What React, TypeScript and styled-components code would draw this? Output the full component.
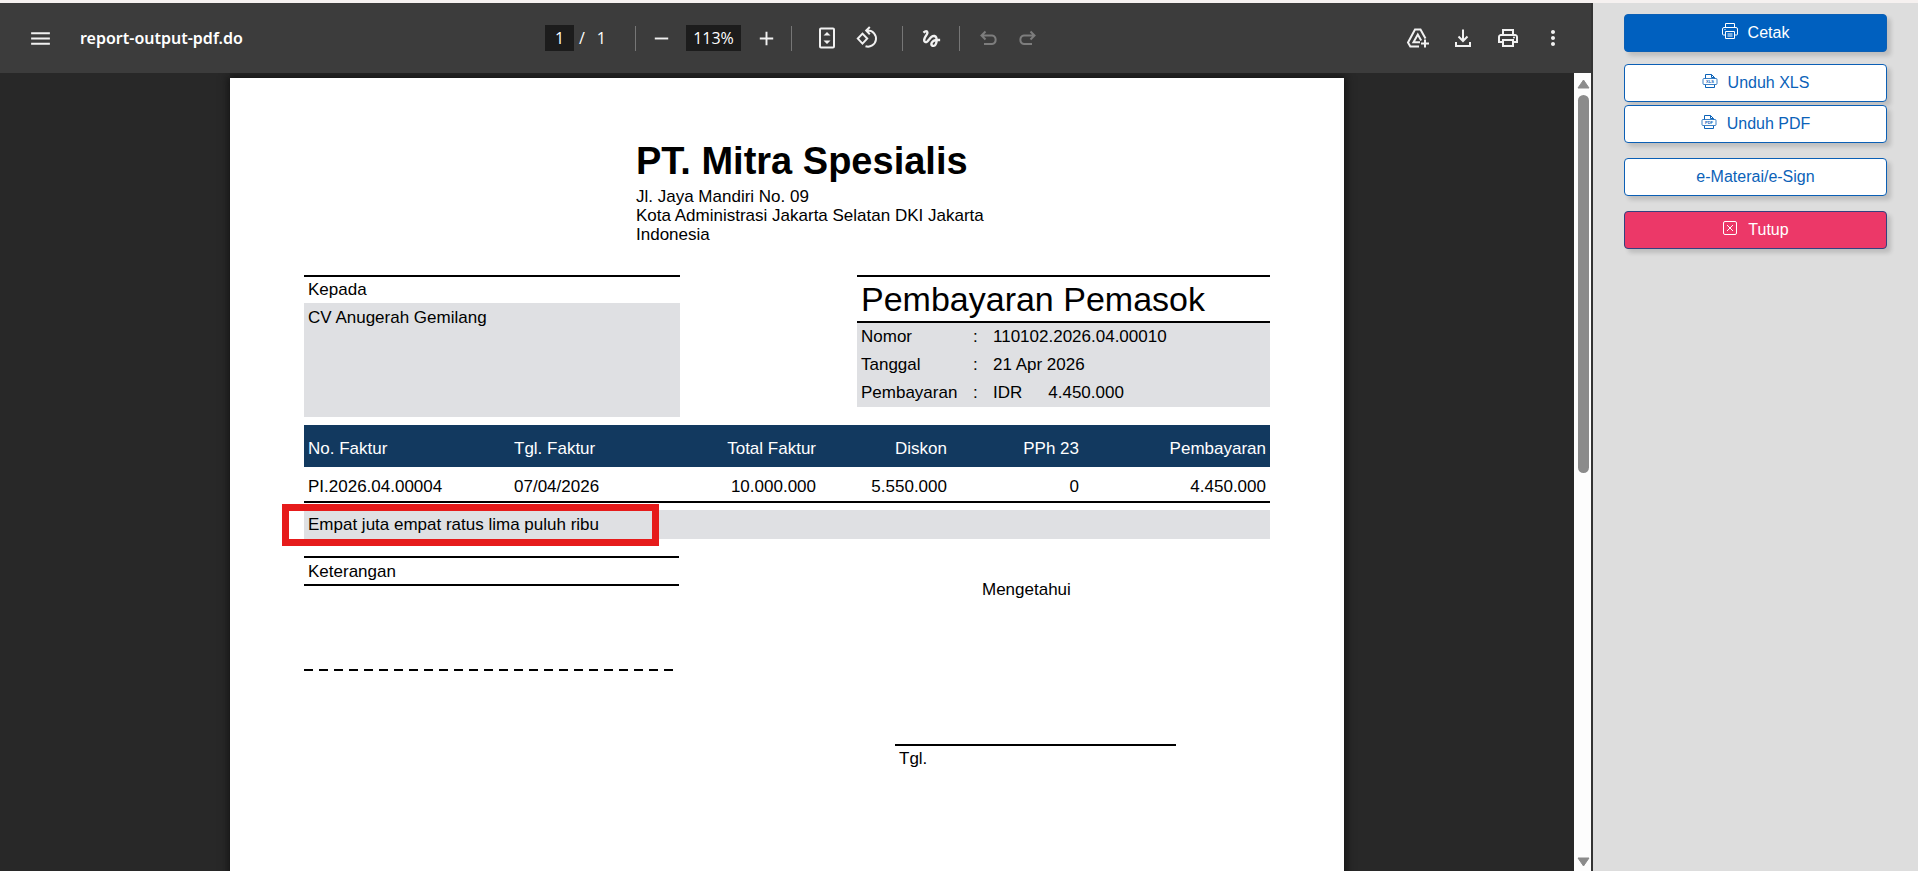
import React from "react";
import styled, { createGlobalStyle, css } from "styled-components";
import { MdOutlinePrint, MdMoreVert, MdMenu, MdAdd, MdRemove, MdGesture } from "react-icons/md";

const GlobalStyle = createGlobalStyle`
  *, *::before, *::after { box-sizing: border-box; }
  body { margin: 0; background: #f6f1f0; }
  h1, h2, p, dl, dd, dt { margin: 0; font-weight: inherit; }
`;

const Shell = styled.div`
  display: flex;
  height: 100vh;
  padding-top: 3px;
  overflow: hidden;
  font-family: "Liberation Sans", Arial, sans-serif;
`;

const Viewer = styled.main`
  flex: 1;
  min-width: 0;
  display: flex;
  flex-direction: column;
  background: #282828;
  border-right: 2px solid #333333;
`;

const Toolbar = styled.header`
  flex: none;
  height: 70px;
  display: grid;
  grid-template-columns: 1fr auto 1fr;
  align-items: center;
  padding: 0 18px 0 20px;
  background: #3c3c3c;
  color: #ffffff;
  font-family: "Open Sans", "Noto Sans", sans-serif;
  font-size: 16px;
`;

const ToolGroup = styled.div<{ $gap: number; $end?: boolean }>`
  display: flex;
  align-items: center;
  justify-content: ${(p) => (p.$end ? "flex-end" : "flex-start")};
  gap: ${(p) => p.$gap}px;
`;

const PageTools = styled.div`
  display: flex;
  padding: 0 7px 0 10px;
`;

const IconButton = styled.button`
  display: flex;
  align-items: center;
  justify-content: center;
  width: 40px;
  height: 40px;
  padding: 0;
  border: 0;
  background: none;
  color: #f1f1f1;
  &:disabled { color: #7d7d7d; }
`;

const FileName = styled.h1`
  font-family: "Noto Sans", "Open Sans", sans-serif;
  font-size: 16px;
  font-weight: 600;
  white-space: nowrap;
`;

const Field = styled.input<{ $wide?: boolean }>`
  width: ${(p) => (p.$wide ? 55 : 29)}px;
  height: 26px;
  padding: 0;
  border: 0;
  background: #1c1c1c;
  color: #ffffff;
  font: inherit;
  text-align: center;
`;

const PageCount = styled.span`
  display: flex;
  gap: 12px;
  margin: 0 24px 0 5px;
`;

const Divider = styled.span<{ $space: number }>`
  width: 1px;
  height: 25px;
  margin: 0 ${(p) => p.$space}px;
  background: #767676;
`;

const Stage = styled.div`
  flex: 1;
  min-height: 0;
  display: flex;
`;

const Canvas = styled.div`
  flex: 1;
  min-width: 0;
  display: flex;
  justify-content: center;
  align-items: flex-start;
  padding-top: 5px;
  overflow: hidden;
`;

const Sheet = styled.article`
  flex: none;
  width: 1114px;
  min-height: 1575px;
  padding: 61px 74px;
  background: #ffffff;
  color: #000000;
  font-size: 17px;
  line-height: 19px;
  box-shadow: 0 0 8px 2px #141414;
`;

const Track = styled.div`
  flex: none;
  width: 17px;
  display: flex;
  flex-direction: column;
  align-items: center;
  justify-content: space-between;
  gap: 6px;
  padding: 6px 0 4px 1px;
  background: #fdfdfd;
`;

const ThumbLane = styled.div`
  flex: 1;
`;

const Thumb = styled.div`
  width: 11px;
  height: 50%;
  border-radius: 6px;
  background: #8b8b8b;
`;

const Letterhead = styled.header`
  padding-left: 332px;
`;

const Company = styled.h2`
  font-size: 38px;
  line-height: 44px;
  font-weight: 700;
  margin-bottom: 4px;
`;

const Parties = styled.div`
  display: flex;
  justify-content: space-between;
  align-items: flex-start;
  margin-top: 31px;
`;

const Panel = styled.section<{ $width: number }>`
  width: ${(p) => p.$width}px;
  border-top: 2px solid #000000;
`;

const PanelLabel = styled.h3<{ $ruled?: boolean }>`
  margin: 0;
  padding: 3px 4px;
  height: 26px;
  font-size: 17px;
  font-weight: 400;
  ${(p) => p.$ruled && css`height: 28px; padding: 4px; border-bottom: 2px solid #000000;`}
`;

const Recipient = styled.p`
  height: 114px;
  padding: 5px 4px;
  background: #dfe0e3;
`;

const DocTitle = styled.h3`
  margin: 0;
  padding: 3px 4px 0;
  height: 46px;
  border-bottom: 2px solid #000000;
  font-size: 34px;
  line-height: 38px;
  font-weight: 400;
  white-space: nowrap;
`;

const Facts = styled.dl`
  display: grid;
  grid-template-columns: 112px 20px 1fr;
  grid-auto-rows: 28px;
  padding: 4px 4px 0;
  height: 84px;
  background: #dfe0e3;
`;

const Money = styled.dd`
  display: flex;
  gap: 26px;
`;

const Invoices = styled.table`
  width: 100%;
  margin-top: 8px;
  table-layout: fixed;
  border-collapse: collapse;
  border-bottom: 2px solid #000000;
`;

const HeadRow = styled.tr`
  height: 42px;
  background: #12395f;
  color: #ffffff;
`;

const BodyRow = styled.tr`
  height: 35px;
`;

const cell = css<{ $num?: boolean }>`
  padding: 4px 4px 0;
  font-weight: 400;
  text-align: ${(p) => (p.$num ? "right" : "left")};
`;
const Th = styled.th<{ $num?: boolean }>`${cell}`;
const Td = styled.td<{ $num?: boolean }>`${cell}`;

const Words = styled.p`
  position: relative;
  height: 29px;
  margin-top: 7px;
  padding: 5px 4px;
  background: #dfe0e3;
`;

const Highlight = styled.span`
  position: absolute;
  top: -6px;
  left: -22px;
  width: 377px;
  height: 42px;
  border: 7px solid #e61b1b;
`;

const Footer = styled.div`
  display: flex;
  justify-content: space-between;
  align-items: flex-start;
  margin-top: 17px;
`;

const Dashes = styled.hr`
  height: 2px;
  margin: 83px 0 0;
  border: 0;
  background: repeating-linear-gradient(90deg, #000000 0 9px, transparent 9px 15px);
`;

const Approval = styled.section`
  width: 281px;
  margin: 24px 94px 0 0;
`;

const Approver = styled.p`
  padding-left: 87px;
`;

const SignDate = styled.p`
  margin-top: 145px;
  padding: 3px 4px;
  border-top: 2px solid #000000;
`;

const Sidebar = styled.aside`
  flex: none;
  width: 325px;
  display: flex;
  flex-direction: column;
  gap: 12px;
  padding: 11px 31px;
  background: #dddddd;
`;

const Stack = styled.div`
  display: flex;
  flex-direction: column;
  gap: 15px;
`;

const Downloads = styled.div`
  display: flex;
  flex-direction: column;
  gap: 3px;
`;

const tones = {
  primary: css`background: #0060bf; color: #ffffff;`,
  plain: css`background: #ffffff; color: #0b62b8;`,
  danger: css`background: #ec3868; color: #ffffff; border-color: #33417f;`,
};

const Action = styled.button<{ $tone: keyof typeof tones }>`
  flex: none;
  display: flex;
  align-items: center;
  justify-content: center;
  gap: 10px;
  height: 38px;
  width: 100%;
  padding: 0;
  border: 1px solid #0b5fb5;
  border-radius: 4px;
  box-shadow: 4px 4px 4px rgba(0, 0, 0, 0.14);
  font-family: inherit;
  font-size: 16px;
  ${(p) => tones[p.$tone]}

  svg { margin-bottom: 4px; }
`;

const Icon = ({ children, size = 24 }: { children: React.ReactNode; size?: number }) => (
  <svg width={size} height={size} viewBox="0 0 24 24" fill="none" stroke="currentColor" strokeWidth="2" aria-hidden="true">
    {children}
  </svg>
);

const SmallIcon = ({ children }: { children: React.ReactNode }) => (
  <svg width="16" height="16" viewBox="0 0 16 16" fill="none" stroke="currentColor" strokeWidth="1" strokeLinejoin="round" aria-hidden="true">
    {children}
  </svg>
);

const FileIcon = ({ label }: { label: string }) => (
  <SmallIcon>
    <path d="M3.500 5.500V1.500h6l3 3v1M9.500 1.500v3h3M3.500 12v2.500h9V12" />
    <path d="M2 5.500h12a1 1 0 0 1 1 1v4a1 1 0 0 1-1 1H2a1 1 0 0 1-1-1v-4a1 1 0 0 1 1-1z" strokeOpacity="0.8" />
    <text x="8" y="10" fontSize="4" fontWeight="700" textAnchor="middle" fill="currentColor" stroke="none">{label}</text>
  </SmallIcon>
);

const columns = [
  { label: "No. Faktur", width: 206, value: "PI.2026.04.00004" },
  { label: "Tgl. Faktur", width: 140, value: "07/04/2026" },
  { label: "Total Faktur", width: 170, value: "10.000.000", num: true },
  { label: "Diskon", width: 131, value: "5.550.000", num: true },
  { label: "PPh 23", width: 132, value: "0", num: true },
  { label: "Pembayaran", width: 187, value: "4.450.000", num: true },
];

export default function App() {
  return (
    <>
      <GlobalStyle />
      <Shell>
        <Viewer>
          <Toolbar>
            <ToolGroup $gap={20}>
              <IconButton aria-label="Menu"><MdMenu size={25} /></IconButton>
              <FileName>report-output-pdf.do</FileName>
            </ToolGroup>
            <ToolGroup $gap={0}>
              <Field aria-label="Page" defaultValue="1" />
              <PageCount><span>/</span><span>1</span></PageCount>
              <Divider $space={5} />
              <ToolGroup $gap={5}>
                <IconButton aria-label="Zoom out"><MdRemove size={23} /></IconButton>
                <Field $wide aria-label="Zoom" defaultValue="113%" />
                <IconButton aria-label="Zoom in"><MdAdd size={23} /></IconButton>
              </ToolGroup>
              <Divider $space={5} />
              <PageTools>
                <IconButton aria-label="Fit to page">
                  <Icon>
                    <rect x="5" y="2.500" width="14" height="19" rx="1" />
                    <path d="M12 6l3.500 3.500h-7zM12 18l3.500-3.500h-7z" fill="currentColor" stroke="none" />
                  </Icon>
                </IconButton>
                <IconButton aria-label="Rotate">
                  <Icon>
                    <path d="M7.500 7.600 12.200 12.600 7.500 17.600 2.800 12.600z" />
                    <path d="M12 4.600h1a8 8 0 1 1-2.500 15.600M14.800 1l-3.600 3.600 3.600 3.600" />
                  </Icon>
                </IconButton>
              </PageTools>
              <Divider $space={8} />
              <IconButton aria-label="Draw"><MdGesture size={23} /></IconButton>
              <Divider $space={8} />
              <IconButton aria-label="Undo" disabled>
                <Icon><path d="M9.500 5.500 5.500 9.500l4 4M5.500 9.500H16a4.300 4.300 0 0 1 0 8.500H8" /></Icon>
              </IconButton>
              <IconButton aria-label="Redo" disabled>
                <Icon><path d="M14.500 5.500l4 4-4 4M18.500 9.500H8A4.300 4.300 0 0 0 8 18h8" /></Icon>
              </IconButton>
            </ToolGroup>
            <ToolGroup $gap={5} $end>
              <IconButton aria-label="Save to Drive">
                <Icon>
                  <path d="M13 20.500H4.300L2 16.500 9 3.500h5.500l5 9" />
                  <path d="M14 16.200H7.500L11.800 8.500l3.400 6" />
                  <path d="M19 13.500v8M15 17.500h8" />
                </Icon>
              </IconButton>
              <IconButton aria-label="Download">
                <Icon><path d="M12 3.500v11.500M7.500 10.500l4.500 4.500 4.500-4.500M5 16v4h14v-4" /></Icon>
              </IconButton>
              <IconButton aria-label="Print"><MdOutlinePrint size={24} /></IconButton>
              <IconButton aria-label="More"><MdMoreVert size={24} /></IconButton>
            </ToolGroup>
          </Toolbar>
          <Stage>
            <Canvas>
              <Sheet>
                <Letterhead>
                  <Company>PT. Mitra Spesialis</Company>
                  <p>Jl. Jaya Mandiri No. 09</p>
                  <p>Kota Administrasi Jakarta Selatan DKI Jakarta</p>
                  <p>Indonesia</p>
                </Letterhead>
                <Parties>
                  <Panel $width={376}>
                    <PanelLabel>Kepada</PanelLabel>
                    <Recipient>CV Anugerah Gemilang</Recipient>
                  </Panel>
                  <Panel $width={413}>
                    <DocTitle>Pembayaran Pemasok</DocTitle>
                    <Facts>
                      <dt>Nomor</dt><dd>:</dd><dd>110102.2026.04.00010</dd>
                      <dt>Tanggal</dt><dd>:</dd><dd>21 Apr 2026</dd>
                      <dt>Pembayaran</dt><dd>:</dd><Money><span>IDR</span><span>4.450.000</span></Money>
                    </Facts>
                  </Panel>
                </Parties>
                <Invoices>
                  <colgroup>{columns.map((c) => <col key={c.label} width={c.width} />)}</colgroup>
                  <thead>
                    <HeadRow>{columns.map((c) => <Th key={c.label} $num={c.num}>{c.label}</Th>)}</HeadRow>
                  </thead>
                  <tbody>
                    <BodyRow>{columns.map((c) => <Td key={c.label} $num={c.num}>{c.value}</Td>)}</BodyRow>
                  </tbody>
                </Invoices>
                <Words>
                  Empat juta empat ratus lima puluh ribu
                  <Highlight />
                </Words>
                <Footer>
                  <Panel $width={375}>
                    <PanelLabel $ruled>Keterangan</PanelLabel>
                    <Dashes />
                  </Panel>
                  <Approval>
                    <Approver>Mengetahui</Approver>
                    <SignDate>Tgl.</SignDate>
                  </Approval>
                </Footer>
              </Sheet>
            </Canvas>
            <Track aria-hidden="true">
              <svg width="13" height="10" viewBox="0 0 13 10"><path d="M6.500 1 12 9H1z" fill="#8b8b8b" stroke="#8b8b8b" strokeLinejoin="round" /></svg>
              <ThumbLane><Thumb /></ThumbLane>
              <svg width="13" height="10" viewBox="0 0 13 10"><path d="M6.500 9 12 1H1z" fill="#8b8b8b" stroke="#8b8b8b" strokeLinejoin="round" /></svg>
            </Track>
          </Stage>
        </Viewer>
        <Sidebar>
          <Action $tone="primary">
            <SmallIcon>
              <path d="M3.500 4.500v-4h9v4M3.500 12H1.500a1 1 0 0 1-1-1V6a1.500 1.500 0 0 1 1.500-1.500h12A1.500 1.500 0 0 1 15.500 6v5a1 1 0 0 1-1 1h-2M2.500 6.500h1" />
              <path d="M3.500 8.500h9v7h-9zM5.500 11h5M5.500 13h5" />
            </SmallIcon>
            Cetak
          </Action>
          <Stack>
            <Downloads>
              <Action $tone="plain"><FileIcon label="XLS" />Unduh XLS</Action>
              <Action $tone="plain"><FileIcon label="PDF" />Unduh PDF</Action>
            </Downloads>
            <Action $tone="plain">e-Materai/e-Sign</Action>
            <Action $tone="danger">
              <SmallIcon>
                <rect x="1.500" y="1.500" width="13" height="13" rx="1.500" />
                <path d="M5 5l6 6M11 5l-6 6" />
              </SmallIcon>
              Tutup
            </Action>
          </Stack>
        </Sidebar>
      </Shell>
    </>
  );
}
